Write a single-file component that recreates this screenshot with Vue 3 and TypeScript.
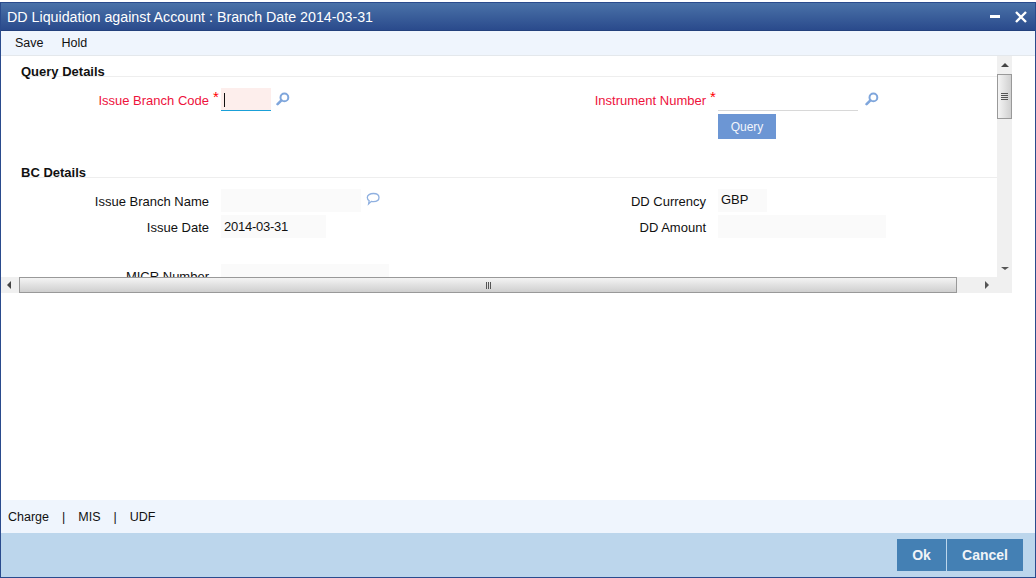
<script setup lang="ts">
const menu: string[] = ['Save', 'Hold']
</script>

<template>
  <div class="page">
    <div class="window">
      <header class="title">
        <span class="title-text">DD Liquidation against Account : Branch Date 2014-03-31</span>
        <span class="win-btns">
          <svg width="12" height="12" viewBox="0 0 12 12"><rect x="1" y="4" width="10" height="3" fill="#fff" /></svg>
          <svg width="14" height="14" viewBox="0 0 14 14"><path d="M2 2 L12 12 M12 2 L2 12" stroke="#fff" stroke-width="2.4" /></svg>
        </span>
      </header>
      <nav class="menu">
        <span v-for="m in menu" :key="m" class="menu-item">{{ m }}</span>
      </nav>

      <div class="scroller">
        <div class="viewport">
          <div class="form">
            <h3 class="sec">Query Details</h3>
            <div class="query-grid">
              <div class="field">
                <label class="lbl req">Issue Branch Code</label><span class="star">*</span>
                <span class="inp inp-req w50"><i class="caret"></i></span>
                <svg class="ico ico-q" width="14" height="14" viewBox="0 0 14 14"><circle cx="8.4" cy="5.4" r="3.9" fill="none" stroke="#7fa6dc" stroke-width="2" /><path d="M5.4 8.4 L1.6 12.2" stroke="#7fa6dc" stroke-width="2.6" stroke-linecap="round" /></svg>
              </div>
              <div class="field">
                <label class="lbl req">Instrument Number</label><span class="star">*</span>
                <span class="inp inp-plain w140"></span>
                <svg class="ico ico-q ico-r" width="14" height="14" viewBox="0 0 14 14"><circle cx="8.4" cy="5.4" r="3.9" fill="none" stroke="#7fa6dc" stroke-width="2" /><path d="M5.4 8.4 L1.6 12.2" stroke="#7fa6dc" stroke-width="2.6" stroke-linecap="round" /></svg>
              </div>
            </div>
            <div class="query-row"><button class="query" type="button">Query</button></div>

            <h3 class="sec sec-bc">BC Details</h3>
            <div class="bc-grid">
              <div class="bc-col">
                <div class="field">
                  <label class="lbl">Issue Branch Name</label>
                  <span class="inp ro w140"></span>
                  <svg class="ico" width="14" height="14" viewBox="0 0 14 14"><path d="M7.4 1.5 C10.7 1.5 13 3.2 13 5.6 C13 8 10.7 9.7 7.4 9.7 C6.6 9.7 5.9 9.6 5.3 9.4 L2.6 12 L3.2 8.7 C2 8 1.3 6.9 1.3 5.6 C1.3 3.2 4 1.5 7.4 1.5 Z" fill="none" stroke="#8fb0e0" stroke-width="1.3" /></svg>
                </div>
                <div class="field">
                  <label class="lbl">Issue Date</label>
                  <span class="inp ro w105 tight">2014-03-31</span>
                </div>
                <div class="field micr">
                  <label class="lbl">MICR Number</label>
                  <span class="inp ro w168"></span>
                </div>
              </div>
              <div class="bc-col">
                <div class="field">
                  <label class="lbl">DD Currency</label>
                  <span class="inp ro w49">GBP</span>
                </div>
                <div class="field">
                  <label class="lbl">DD Amount</label>
                  <span class="inp ro w168"></span>
                </div>
              </div>
            </div>
          </div>
        </div>

        <div class="vbar">
          <span class="arrow up"></span>
          <span class="vthumb"><i></i><i></i><i></i><i></i></span>
          <span class="spacer"></span>
          <span class="arrow down"></span>
        </div>
        <div class="hbar">
          <span class="arrow left"></span>
          <span class="hthumb"><i></i><i></i><i></i></span>
          <span class="arrow right"></span>
        </div>
        <div class="corner"></div>
      </div>

      <div class="fill"></div>

      <div class="tabs">
        <span>Charge</span><span class="sep">|</span><span>MIS</span><span class="sep">|</span><span>UDF</span>
      </div>
      <footer class="foot">
        <button class="act act-ok" type="button">Ok</button>
        <button class="act act-cancel" type="button">Cancel</button>
      </footer>
    </div>
  </div>
</template>

<style>
html, body { margin: 0; background: #fff; }
</style>

<style scoped>
.page {
  width: 1036px;
  height: 578px;
  padding-top: 2px;
  box-sizing: border-box;
  font-family: "Liberation Sans", Arial, sans-serif;
  font-size: 13px;
  color: #111;
  overflow: hidden;
}
.window {
  height: 576px;
  box-sizing: border-box;
  border: 1px solid #2a4b8d;
  display: flex;
  flex-direction: column;
  background: #fff;
}
.title {
  height: 28px;
  flex: none;
  box-sizing: border-box;
  display: flex;
  align-items: center;
  justify-content: space-between;
  padding: 0 7px 0 6px;
  background: linear-gradient(#4a72a8, #2a4a8c);
  border-bottom: 1px solid #23407c;
  color: #fff;
  font-size: 14.25px;
}
.title-text { white-space: nowrap; }
.win-btns { display: flex; align-items: center; gap: 13px; }
.win-btns svg { display: block; }
.menu {
  height: 25px;
  flex: none;
  box-sizing: border-box;
  display: flex;
  align-items: center;
  padding-left: 14px;
  gap: 18px;
  background: #eff5fd;
  border-bottom: 1px solid #e4e8ec;
  font-size: 12.5px;
}
.menu-item { color: #111; }

.scroller {
  flex: none;
  height: 237px;
  width: 1011px;
  display: grid;
  grid-template-columns: 996px 15px;
  grid-template-rows: 221px 16px;
}
.viewport { overflow: hidden; }
.form { padding: 8px 0 0 20px; }
.sec {
  margin: 0;
  font-size: 13px;
  font-weight: 700;
  line-height: 15px;
  height: 12px;
  border-bottom: 1px solid #eeeeee;
}
.query-grid, .bc-grid { display: grid; grid-template-columns: 497px 1fr; }
.query-grid { margin-top: 11px; }
.field { display: flex; align-items: center; height: 23px; position: relative; }
.lbl { width: 188px; text-align: right; white-space: nowrap; flex: none; }
.bc-col .lbl { padding-top: 2px; }
.req { color: #ee123c; padding-top: 1px; }
.star {
  position: absolute;
  left: 192px;
  top: 1px;
  color: #f00;
  font-size: 15px;
  line-height: 15px;
}
.inp {
  display: block;
  height: 23px;
  box-sizing: border-box;
  margin-left: 12px;
  padding: 0 3px;
  line-height: 22px;
  flex: none;
}
.tight { letter-spacing: -0.25px; line-height: 24px; }
.ro { background: #fafafa; }
.inp-req { background: #fdeeec; border-bottom: 1px solid #1aa0d8; position: relative; }
.inp-plain { border-bottom: 1px solid #d8d8d8; }
.caret { position: absolute; left: 3px; top: 5px; width: 1px; height: 14px; background: #111; }
.w49 { width: 49px; }
.w50 { width: 50px; }
.w105 { width: 105px; }
.w140 { width: 140px; }
.w168 { width: 168px; }
.ico { margin-left: 5px; margin-top: -4px; flex: none; }
.ico-q { margin-top: -2px; }
.ico-r { margin-left: 7px; }
.query-row { padding-left: 697px; margin-top: 3px; height: 25px; }
.query {
  display: block;
  width: 58px;
  height: 25px;
  border: 0;
  padding: 0;
  background: #6c96d4;
  color: #f2f5fb;
  font: 12px "Liberation Sans", Arial, sans-serif;
}
.sec-bc { margin-top: 26px; }
.bc-grid { margin-top: 11px; }
.bc-col { display: flex; flex-direction: column; gap: 3px; }
.micr { margin-top: 23px; }

.vbar {
  grid-column: 2;
  grid-row: 1;
  background: #f0f0f0;
  display: flex;
  flex-direction: column;
  align-items: center;
}
.arrow { flex: none; display: block; width: 0; height: 0; border-style: solid; border-color: transparent; }
.up { border-width: 0 4px 4px; border-bottom-color: #444; margin: 7px 0; }
.down { border-width: 3px 4px 0; border-top-color: #555; margin: 7px 0; }
.vthumb {
  flex: none;
  box-sizing: border-box;
  width: 15px;
  height: 45px;
  border: 1px solid #999;
  background: linear-gradient(90deg, #f4f4f4, #d0d0d0);
  display: flex;
  flex-direction: column;
  align-items: center;
  justify-content: center;
  gap: 1px;
}
.vthumb i { display: block; width: 7px; height: 1px; background: #555; }
.spacer { flex: 1; }

.hbar {
  grid-column: 1;
  grid-row: 2;
  background: #f0f0f0;
  display: flex;
  align-items: center;
}
.left { border-width: 4px 4px 4px 0; border-right-color: #444; margin: 0 8px 0 6px; }
.right { border-width: 4px 0 4px 4px; border-left-color: #555; margin: 0 8px 0 28px; }
.hthumb {
  flex: 1;
  height: 16px;
  box-sizing: border-box;
  border: 1px solid #999;
  background: linear-gradient(#f4f4f4, #cfcfcf);
  display: flex;
  align-items: center;
  justify-content: center;
  gap: 1px;
}
.hthumb i { display: block; width: 1px; height: 7px; background: #555; }
.corner { grid-column: 2; grid-row: 2; background: #f0f0f0; }

.fill { flex: 1; }
.tabs {
  height: 33px;
  flex: none;
  box-sizing: border-box;
  display: flex;
  align-items: center;
  padding-left: 7px;
  background: #eff5fd;
  gap: 13px;
  font-size: 12.5px;
}
.foot {
  height: 44px;
  flex: none;
  box-sizing: border-box;
  display: flex;
  justify-content: flex-end;
  align-items: flex-start;
  padding: 6px 12px 0 0;
  background: #bcd6ec;
  gap: 1px;
}
.act {
  height: 32px;
  border: 0;
  padding: 0;
  background: #4480b4;
  color: #f0f4f8;
  font: 700 14px "Liberation Sans", Arial, sans-serif;
}
.act-ok { width: 49px; }
.act-cancel { width: 76px; }
</style>
